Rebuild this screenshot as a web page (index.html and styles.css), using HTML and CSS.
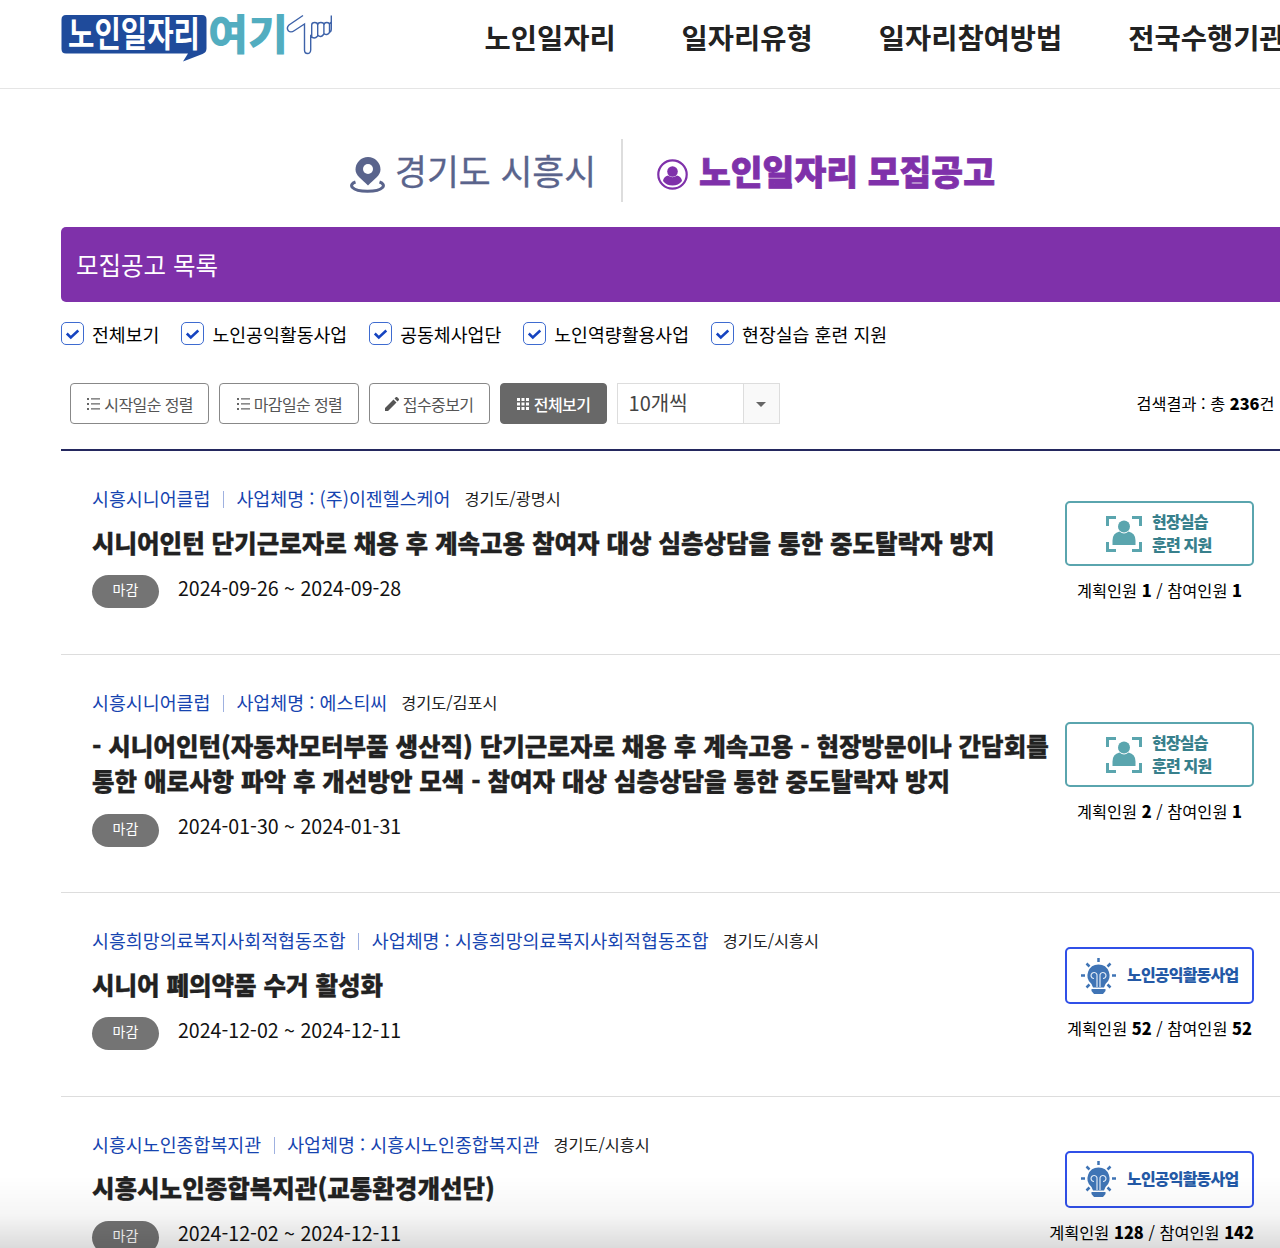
FILE: index.html
```html
<!DOCTYPE html>
<html lang="ko">
<head>
  <meta charset="UTF-8" />
  <title>노인일자리 여기 - 모집공고</title>
  <link rel="stylesheet" href="styles.css">
</head>
<body>

<!-- shared icons -->
<svg class="defs" width="0" height="0">
  <symbol id="check" viewBox="0 0 21 21">
    <path d="M4.800 10.500l4 4 7.500-7" fill="none" stroke="#1644c0" stroke-width="2.500" />
  </symbol>
  <symbol id="list" viewBox="0 0 14 14">
    <path d="M1 1h2v2H1zM1 6h2v2H1zM1 11h2v2H1zM5 1.300h9v1.300H5zM5 6.300h9v1.300H5zM5 11.300h9v1.300H5z" fill="#666" />
  </symbol>
  <symbol id="person" viewBox="0 0 36 36">
    <path d="M1.500 10V1.500H10M26 1.500h8.500V10M34.500 26v8.500H26M10 34.500H1.500V26" fill="none" stroke="#5aa5ae" stroke-width="3" />
    <circle cx="18" cy="10.500" r="6" fill="#5aa5ae" />
    <path d="M6.500 29v-4.500q0-7.500 7-9q4.500 4 9 0q7 1.500 7 9V29z" fill="#5aa5ae" />
  </symbol>
  <symbol id="bulb" viewBox="0 0 36 36">
    <path d="M17.500 0v4M5.500 5.500l3 3M29.500 5.500l-3 3M0 17.500h4M31 17.500h4M5.500 29.500l3-3M29.500 29.500l-3-3" stroke="#3f74b5" stroke-width="2.500" />
    <path d="M17.500 6.500a11 11 0 0 1 7 19.500l-1.500 3.500H12l-1.500-3.500a11 11 0 0 1 7-19.500z" fill="#3f74b5" />
    <path d="M16 29V18a3 3 0 1 0-3 2.500M19 29V18a3 3 0 1 1 3 2.500" fill="none" stroke="#dfe9f5" stroke-width="1.200" />
    <path d="M10.500 31h14v2l-2.500 3h-9l-2.500-3z" fill="#3f74b5" />
  </symbol>
</svg>

<header class="header">
  <svg class="logo" width="274" height="50" viewBox="0 0 274 50">
    <path d="M5 2h136q4.500 0 4.500 4.500v29q0 4-4 5.500l-19.500 7.500 5-8H5q-4.500 0-4.500-4.500V6.500Q.5 2 5 2z" fill="#1f4b9b" />
    <text x="7" y="34" class="logo-sub" textLength="132" lengthAdjust="spacingAndGlyphs">노인일자리</text>
    <text x="147" y="37" class="logo-main" textLength="80" lengthAdjust="spacingAndGlyphs">여기</text>
    <path d="M242 2.500L228 12q-3 3-.5 6 2.500 2 6-.5l10-6.500v26q0 3.500 3 3.500t3.200-3.500V23q3.500 4 7 0V12q0-2.500-3-2.500t-3 2.500v12M256.700 12q0-2.500 3.200-2.500t3 2.500v9q-3 4.500-6.200 1M263 12q0-2.500 2.800-2.500t2.700 2.500v7.500q-2.500 3.500-5.500 1M268.500 19q1.800 0 1.800-3V2.500M268.500 11l1.800-2" fill="none" stroke="#3d62a9" stroke-width="1.400" />
  </svg>
  <nav class="nav">
    <a>노인일자리</a>
    <a>일자리유형</a>
    <a>일자리참여방법</a>
    <a>전국수행기관</a>
  </nav>
</header>

<main class="content">
  <div class="page-title">
    <div class="region">
      <svg width="36" height="36" viewBox="0 0 36 36">
        <path d="M5.500 25C-2 27.500 1 34.300 17.500 34.300S37 27.500 29.500 25" fill="none" stroke="#5a648c" stroke-width="3" />
        <path d="M18 0a12.500 12.500 0 0 1 12.500 12.500C30.500 19 24 22 18 28.500 12 22 5.500 19 5.500 12.500A12.500 12.500 0 0 1 18 0z" fill="#5a648c" />
        <circle cx="18" cy="12" r="5" fill="#fff" />
      </svg>
      <span>경기도 시흥시</span>
    </div>
    <h1>
      <svg width="31" height="31" viewBox="0 0 31 31">
        <circle cx="15.500" cy="15.500" r="14.200" fill="none" stroke="#7f31aa" stroke-width="2.200" />
        <circle cx="15.500" cy="12.500" r="5.300" fill="#7f31aa" />
        <path d="M6 22q.5-4.500 5-5.500 4.500 3.500 9 0 4.500 1 5 5.500-3.500 4.500-9.500 4.500T6 22z" fill="#7f31aa" />
      </svg>
      <span>노인일자리 모집공고</span>
    </h1>
  </div>

  <h2 class="list-title">모집공고 목록</h2>

  <div class="filters">
    <label><i><svg><use href="#check" /></svg></i>전체보기</label>
    <label><i><svg><use href="#check" /></svg></i>노인공익활동사업</label>
    <label><i><svg><use href="#check" /></svg></i>공동체사업단</label>
    <label><i><svg><use href="#check" /></svg></i>노인역량활용사업</label>
    <label><i><svg><use href="#check" /></svg></i>현장실습 훈련 지원</label>
  </div>

  <div class="toolbar">
    <button class="btn sort"><svg><use href="#list" /></svg>시작일순 정렬</button>
    <button class="btn sort"><svg><use href="#list" /></svg>마감일순 정렬</button>
    <button class="btn open">
      <svg viewBox="0 0 14 14"><path d="M0 14v-3l8.500-8.500 3 3L3 14zM9.500 1.500L11 0h1l2 2v1l-1.500 1.500z" fill="#555" /></svg>접수중보기</button>
    <button class="btn all">
      <svg viewBox="0 0 14 14"><path d="M1 1h3v3H1zM5.500 1h3v3h-3zM10 1h3v3h-3zM1 5.500h3v3H1zM5.500 5.500h3v3h-3zM10 5.500h3v3h-3zM1 10h3v3H1zM5.500 10h3v3h-3zM10 10h3v3h-3z" fill="#fff" /></svg>전체보기</button>
    <div class="select"><span>10개씩</span><b></b></div>
    <p class="total">검색결과 : 총 <strong>236</strong>건</p>
  </div>

  <ul class="list">
    <li>
      <div class="info">
        <p class="org"><span>시흥시니어클럽</span><span>사업체명 : (주)이젠헬스케어</span><em>경기도/광명시</em></p>
        <h3>시니어인턴 단기근로자로 채용 후 계속고용 참여자 대상 심층상담을 통한 중도탈락자 방지</h3>
        <p class="date"><span class="state">마감</span>2024-09-26 ~ 2024-09-28</p>
      </div>
      <div class="side">
        <div class="badge training"><svg><use href="#person" /></svg><span>현장실습<br>훈련 지원</span></div>
        <p>계획인원 <strong>1</strong> / 참여인원 <strong>1</strong></p>
      </div>
    </li>
    <li>
      <div class="info">
        <p class="org"><span>시흥시니어클럽</span><span>사업체명 : 에스티씨</span><em>경기도/김포시</em></p>
        <h3>- 시니어인턴(자동차모터부품 생산직) 단기근로자로 채용 후 계속고용 - 현장방문이나 간담회를<br>통한 애로사항 파악 후 개선방안 모색 - 참여자 대상 심층상담을 통한 중도탈락자 방지</h3>
        <p class="date"><span class="state">마감</span>2024-01-30 ~ 2024-01-31</p>
      </div>
      <div class="side">
        <div class="badge training"><svg><use href="#person" /></svg><span>현장실습<br>훈련 지원</span></div>
        <p>계획인원 <strong>2</strong> / 참여인원 <strong>1</strong></p>
      </div>
    </li>
    <li>
      <div class="info">
        <p class="org"><span>시흥희망의료복지사회적협동조합</span><span>사업체명 : 시흥희망의료복지사회적협동조합</span><em>경기도/시흥시</em></p>
        <h3>시니어 폐의약품 수거 활성화</h3>
        <p class="date"><span class="state">마감</span>2024-12-02 ~ 2024-12-11</p>
      </div>
      <div class="side">
        <div class="badge public"><svg><use href="#bulb" /></svg><span>노인공익활동사업</span></div>
        <p>계획인원 <strong>52</strong> / 참여인원 <strong>52</strong></p>
      </div>
    </li>
    <li>
      <div class="info">
        <p class="org"><span>시흥시노인종합복지관</span><span>사업체명 : 시흥시노인종합복지관</span><em>경기도/시흥시</em></p>
        <h3>시흥시노인종합복지관(교통환경개선단)</h3>
        <p class="date"><span class="state">마감</span>2024-12-02 ~ 2024-12-11</p>
      </div>
      <div class="side">
        <div class="badge public"><svg><use href="#bulb" /></svg><span>노인공익활동사업</span></div>
        <p>계획인원 <strong>128</strong> / 참여인원 <strong>142</strong></p>
      </div>
    </li>
  </ul>
</main>

<div class="fade"></div>

</body>
</html>
```
FILE: styles.css
```css
* {
  box-sizing: border-box;
  margin: 0;
  padding: 0;
}
body {
  height: 1248px;
  overflow: hidden;
  font-family: "Noto Sans CJK KR", sans-serif;
  color: #111;
  background: #fff;
  white-space: nowrap;
}
.defs {
  display: block;
}
.header {
  display: flex;
  height: 89px;
  padding-left: 61px;
  border-bottom: 1px solid #e5e5e5;
}
.logo {
  flex: none;
  margin-top: 13px;
  overflow: visible;
}
.logo-sub {
  font-size: 35.500px;
  font-weight: 700;
  fill: #fff;
}
.logo-main {
  font-size: 42px;
  font-weight: 900;
  fill: #52adc0;
}
.nav {
  display: flex;
  gap: 66px;
  margin-left: 149.500px;
  font-size: 28.500px;
  font-weight: 700;
  line-height: 74px;
  color: #222;
}
.content {
  width: 1260px;
  margin-left: 61px;
}
.page-title {
  display: flex;
  height: 63px;
  margin: 50px 0 25px 289px;
}
.region, .page-title h1 {
  display: flex;
  align-items: center;
}
.page-title svg {
  flex: none;
  margin-top: 8px;
}
.region {
  width: 273px;
  gap: 9px;
  border-right: 2px solid #ddd;
  font-size: 34.700px;
  color: #5a648c;
  -webkit-text-stroke: 0.3px #5a648c;
}
.page-title h1 {
  margin-left: 34px;
  gap: 11px;
  font-size: 34.600px;
  font-weight: 900;
  color: #7f31aa;
  -webkit-text-stroke: 0.8px #7f31aa;
}
.page-title span {
  line-height: 61px;
  margin-top: -1px;
}
.list-title {
  height: 75px;
  padding-left: 15px;
  border-radius: 5px;
  background: #7f31aa;
  color: #fff;
  font-size: 24.500px;
  font-weight: 400;
  line-height: 75px;
}
.filters {
  display: flex;
  gap: 22px;
  margin-top: 20px;
  font-size: 18.320px;
  line-height: 24px;
  color: #000;
}
.filters label {
  display: flex;
  gap: 8px;
}
.filters i {
  width: 23px;
  height: 23px;
  border: 1px solid #3e6bd0;
  border-radius: 5px;
}
.filters svg {
  display: block;
  width: 21px;
  height: 21px;
}
.toolbar {
  display: flex;
  height: 66px;
  margin-top: 37px;
  padding-left: 9px;
}
.btn {
  display: flex;
  align-items: center;
  justify-content: center;
  gap: 4px;
  height: 41px;
  margin-right: 10px;
  border: 1px solid #888;
  border-radius: 4px;
  background: #fff;
  font-family: inherit;
  font-size: 16px;
  line-height: 22px;
  letter-spacing: -0.6px;
  color: #555;
}
.btn svg {
  width: 14px;
  height: 14px;
}
.sort {
  width: 139.300px;
}
.open {
  width: 121px;
}
.all {
  width: 107px;
  background: #686868;
  border-color: #686868;
  color: #fff;
  font-weight: 500;
}
.select {
  display: flex;
  width: 163.500px;
  height: 41px;
  border: 1px solid #ddd;
  font-size: 20px;
  line-height: 37px;
  color: #444;
}
.select span {
  width: 125px;
  padding-left: 11px;
}
.select b {
  display: flex;
  align-items: center;
  justify-content: center;
  flex: 1;
  border-left: 1px solid #ddd;
  background: #f9f9f9;
}
.select b::after {
  content: "";
  margin-top: 2px;
  border: 5px solid transparent;
  border-top-color: #666;
  border-bottom: 0;
}
.total {
  margin-left: 356.500px;
  font-size: 16.300px;
  line-height: 40px;
  color: #000;
}
.list {
  border-top: 2px solid #24285f;
  list-style: none;
}
.list li {
  display: flex;
  align-items: center;
  width: 1260px;
  padding: 32.600px 67px 47px 31px;
  border-bottom: 1px solid #ddd;
}
.info {
  flex: 1;
}
.org {
  display: flex;
  align-items: center;
  height: 29px;
  font-size: 18.400px;
  color: #1644b0;
}
.org span + span::before {
  content: "";
  display: inline-block;
  width: 1px;
  height: 17px;
  margin: 0 12.500px;
  vertical-align: -2px;
  background: #9fb1e0;
}
.org em {
  margin-left: 14px;
  font-size: 16.300px;
  font-style: normal;
  color: #222;
}
h3 {
  margin-top: 12px;
  font-size: 24.500px;
  font-weight: 900;
  line-height: 35px;
  color: #222;
  -webkit-text-stroke: 0.3px #222;
}
.date {
  display: flex;
  gap: 19px;
  height: 33px;
  margin-top: 14px;
  font-size: 19.600px;
  line-height: 27px;
}
.state {
  width: 67px;
  height: 33px;
  margin-top: 1.500px;
  border-radius: 17px;
  background: #747474;
  color: #fff;
  font-size: 14px;
  line-height: 29px;
  text-align: center;
}
.side {
  min-width: 189px;
  margin-top: 13px;
}
.side p {
  margin-top: 12px;
  font-size: 16.350px;
  line-height: 24px;
  text-align: center;
  color: #000;
}
.side strong, .total strong {
  font-weight: 900;
}
.badge {
  display: flex;
  align-items: center;
  width: 189px;
  margin-left: auto;
  border: 2px solid #5aa5ae;
  border-radius: 5px;
  font-size: 16px;
  font-weight: 900;
  letter-spacing: -0.8px;
  line-height: 23px;
}
.badge svg {
  flex: none;
  width: 36px;
  height: 36px;
}
.badge span {
  margin-top: -2px;
}
.training {
  height: 65px;
  padding-left: 39px;
  gap: 10px;
  color: #38808c;
}
.public {
  height: 57px;
  padding-left: 14px;
  gap: 10px;
  border-color: #3050e8;
  color: #2459a6;
}
.fade {
  position: fixed;
  left: 0;
  right: 0;
  bottom: 0;
  height: 72px;
  background: linear-gradient(rgba(0, 0, 0, 0), rgba(0, 0, 0, 0.04) 55%, rgba(0, 0, 0, 0.14));
}
```
